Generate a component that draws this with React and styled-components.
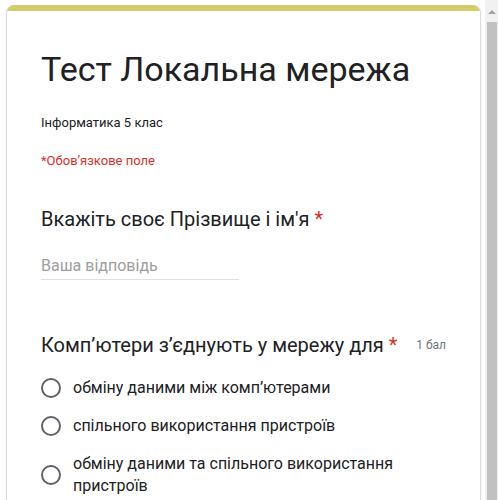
import styled, { createGlobalStyle } from 'styled-components';

const GlobalStyle = createGlobalStyle`
  html, body {
    margin: 0;
    padding: 0;
    background: #fff;
    font-family: Roboto, "Noto Sans", Arial, sans-serif;
    color: #202124;
  }
`;

const Screen = styled.div`
  display: flex;
  height: 500px;
  overflow: hidden;
`;

const Page = styled.div`
  flex: 1;
  padding: 5px 4px 0 6px;
`;

const Card = styled.div`
  background: #fff;
  border: 1px solid #dadce0;
  border-top: none;
  border-radius: 8px 8px 0 0;
  box-shadow: 0 1px 2px rgba(60, 64, 67, 0.15);
  min-height: 600px;
  overflow: hidden;
`;

const Band = styled.div`
  height: 6px;
  background: #d4cb69;
`;

const Body = styled.div`
  padding: 38px 34px 0 34px;
`;

const Title = styled.h1`
  margin: 0;
  font-size: 34px;
  line-height: 40px;
  font-weight: 400;
  color: #202124;
`;

const Desc = styled.div`
  margin-top: 25px;
  font-size: 13px;
  line-height: 18px;
  color: #202124;
`;

const Required = styled.div`
  margin-top: 20px;
  font-size: 13px;
  line-height: 18px;
  color: #d93025;
`;

const Question = styled.section`
  margin-top: ${p => p.gap}px;
`;

const QHead = styled.div`
  display: flex;
  align-items: flex-start;
  justify-content: space-between;
  gap: 12px;
`;

const QTitle = styled.div`
  font-size: 20px;
  line-height: 24px;
  color: #202124;
`;

const Star = styled.span`
  color: #d93025;
  margin-left: 5px;
`;

const Points = styled.span`
  font-size: 12px;
  line-height: 24px;
  color: #70757a;
  white-space: nowrap;
`;

const Input = styled.div`
  margin-top: 23px;
  width: 198px;
  font-size: 16px;
  line-height: 24px;
  color: #9e9e9e;
  padding-bottom: 1px;
  border-bottom: 1px solid #e0e0e0;
`;

const Options = styled.div`
  margin-top: 12px;
  display: flex;
  flex-direction: column;
`;

const Option = styled.label`
  display: flex;
  align-items: center;
  gap: 12px;
  padding: 8px 0;
  font-size: 16px;
  line-height: 22px;
  color: #202124;
`;

const Radio = styled.span`
  flex: none;
  width: 16px;
  height: 16px;
  border: 2px solid #5f6368;
  border-radius: 50%;
`;

const OptionText = styled.span`
  max-width: 360px;
`;

const ScrollBar = styled.div`
  width: 13px;
  flex: none;
  background: #f1f1f1;
  display: flex;
  flex-direction: column;
`;

const ScrollButton = styled.div`
  height: 22px;
  display: flex;
  justify-content: center;
  padding-top: 10px;
  box-sizing: border-box;
  padding-left: 1px;
`;

const Arrow = styled.span`
  width: 0;
  height: 0;
  border-left: 4px solid transparent;
  border-right: 4px solid transparent;
  border-bottom: 4px solid #a3a3a3;
`;

const Thumb = styled.div`
  flex: 1;
  margin: 0 1px 0 2px;
  background: #c1c1c1;
`;

const options = [
  'обміну даними між комп’ютерами',
  'спільного використання пристроїв',
  'обміну даними та спільного використання пристроїв',
];

export default function App() {
  return (
    <>
      <GlobalStyle />
      <Screen>
        <Page>
          <Card>
            <Band />
            <Body>
              <Title>Тест Локальна мережа</Title>
              <Desc>Інформатика 5 клас</Desc>
              <Required>*Обов’язкове поле</Required>

              <Question gap={37}>
                <QTitle>Вкажіть своє Прізвище і ім'я<Star>*</Star></QTitle>
                <Input>Ваша відповідь</Input>
              </Question>

              <Question gap={53}>
                <QHead>
                  <QTitle>Комп’ютери з’єднують у мережу для<Star>*</Star></QTitle>
                  <Points>1 бал</Points>
                </QHead>
                <Options>
                  {options.map(o => (
                    <Option key={o}>
                      <Radio />
                      <OptionText>{o}</OptionText>
                    </Option>
                  ))}
                </Options>
              </Question>
            </Body>
          </Card>
        </Page>
        <ScrollBar>
          <ScrollButton><Arrow /></ScrollButton>
          <Thumb />
        </ScrollBar>
      </Screen>
    </>
  );
}
